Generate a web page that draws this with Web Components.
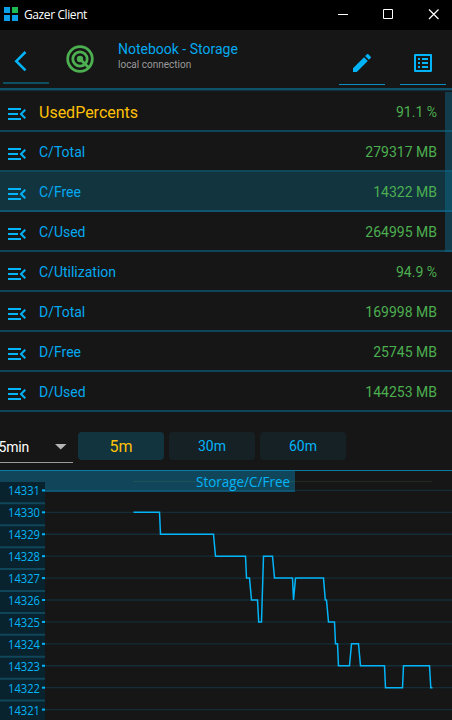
<!DOCTYPE html>
<html lang="en"><head><meta charset="utf-8"><title>Gazer Client</title>
<style>html,body{margin:0;background:#161616}body{width:452px;height:720px;overflow:hidden}</style></head>
<body><gazer-app></gazer-app>
<script>
const define = (name, html) => customElements.define(name, class extends HTMLElement {
  connectedCallback() {
    if (this.shadowRoot) return;
    const root = this.attachShadow({ mode: 'open' });
    root.innerHTML = typeof html === 'function' ? html(this) : html;
  }
});

define('title-bar', `<style>
:host{display:flex;align-items:center;height:30px;background:#000;color:#fff;font:12px "Open Sans",sans-serif;box-sizing:border-box;padding-left:4px}
.t{margin-left:6px;margin-top:-1px;flex:1;letter-spacing:-.4px}
svg{display:block}
.logo{margin-top:-2px}
</style>
<svg class="logo" width="14" height="14"><path fill="#0a9fe6" d="M0 0h6v6H0zM0 8h6v6H0zM8 8h6v6H8z"/><path fill="#1db954" d="M8 0h6v6H8z"/></svg>
<span class="t"><slot></slot></span>
<svg width="118" height="30" fill="none" stroke="#fff"><path d="M4 14.5h10M49.5 9.500h9v9h-9z"/><path stroke-width="1.200" d="M95 9.500l9.500 9.500M104.500 9.500L95 19"/></svg>`);

define('tool-button', `<style>
:host{display:flex;justify-content:center;align-items:center;width:46px;height:54px;box-sizing:border-box;border-bottom:1px solid #0b8fc0;color:#03b4f8}
:host([dim]){border-bottom:2px solid #0d5064}
</style><slot></slot>`);

define('page-header', `<style>
:host{display:flex;height:60px;box-sizing:border-box;border-bottom:2px solid #0e526b;box-shadow:0 1px 1px #0e526b66;margin-bottom:2px}
.titles{flex:1;padding:10px 0 0 23px;font-family:Roboto,sans-serif}
.a{font-size:14px;line-height:18px;color:#03a9f0}
.b{font-size:10px;line-height:14px;color:#9a9a9a}
svg{display:block}
tool-button{margin-right:15px;margin-top:1px}
tool-button.l{margin:0 0 0 3px}
tool-button.r{margin-right:6px}
.ring{margin:14px 0 0 16px}
</style>
<tool-button dim class="l"><svg width="24" height="24" style="margin:10px 14px 0 0"><path fill="none" stroke="#03b4f8" stroke-width="2.600" d="M18.500 3 9.300 12.200l9.200 9.200"/></svg></tool-button>
<svg class="ring" width="30" height="30" viewBox="0 0 30 30" fill="none" stroke="#4caf50" stroke-width="2.800"><circle cx="15" cy="15" r="12.300"/><circle cx="15" cy="15" r="7.200"/><circle cx="15" cy="15" r="3.200" fill="#4caf50" stroke="none"/><path d="M15 15l8.500 8.500"/></svg>
<div class="titles"><div class="a">Notebook - Storage</div><div class="b">local connection</div></div>
<tool-button><svg width="24" height="24" viewBox="0 0 24 24" style="margin-top:11px"><path fill="#03b4f8" d="M3 17.250V21h3.750L17.810 9.940l-3.750-3.750L3 17.250zM20.710 7.040a1 1 0 0 0 0-1.410l-2.340-2.340a1 1 0 0 0-1.410 0l-1.830 1.830 3.750 3.750 1.830-1.830z"/></svg></tool-button>
<tool-button class="r"><svg width="24" height="24" viewBox="0 0 24 24" style="margin-top:11px"><path fill="#03b4f8" d="M19 5v14H5V5h14m1.100-2H3.900c-.5 0-.9.400-.9.900v16.200c0 .4.400.9.900.9h16.200c.4 0 .9-.5.900-.9V3.900c0-.5-.5-.9-.9-.9zM11 7h6v2h-6V7zm0 4h6v2h-6v-2zm0 4h6v2h-6v-2zM7 7h2v2H7V7zm0 4h2v2H7v-2zm0 4h2v2H7v-2z"/></svg></tool-button>`);

define('data-row', el => `<style>
:host{display:flex;align-items:center;height:40px;box-sizing:border-box;border-bottom:2px solid #10465a;padding:0 15px 0 5px;font:14px Roboto,sans-serif;color:#03a9f0}
:host([selected]){background:#12343f;border-color:#0e5674}
svg{display:block;margin:5px 10px 0 0}
.n{flex:1}.v{color:#4caf50}
:host([main]) .n{font-size:16px;color:#ffc107}
.n,.v{margin-top:2px}
</style><svg width="24" height="24" viewBox="0 0 24 24"><path fill="#03b4f8" d="M3 18h13v-2H3v2zm0-5h10v-2H3v2zm0-7v2h13V6H3zm18 9.590L17.420 12 21 8.410 19.590 7l-5 5 5 5L21 15.590z"/></svg>
<span class="n"><slot></slot></span><span class="v">${el.getAttribute('value')}</span>`);

define('data-list', `<style>:host{display:block;position:relative}
.bar{position:absolute;right:0;top:0;width:7px;height:160px;background:rgba(12,116,156,.4)}</style><slot></slot><div class="bar"></div>`);

define('range-button', `<style>
:host{display:flex;align-items:center;justify-content:center;width:86px;height:28px;border-radius:4px;background:#162126;color:#03b4f8;font:14px Roboto,sans-serif}
:host([active]){background:#12343f;color:#ffc107;font-size:16px}
</style><slot></slot>`);

define('range-bar', `<style>
:host{display:flex;gap:5px;height:58px;padding-top:20px;box-sizing:border-box}
.s{width:73px;height:31px;box-sizing:border-box;border-bottom:1px solid #9a9a9a;color:#fff;font:14px Roboto,sans-serif;display:flex;align-items:center;justify-content:space-between;padding-right:6px}
.s span{margin-left:-1.500px;letter-spacing:-.15px}
</style><div class="s"><span>5min</span><svg width="12" height="6"><path fill="#b5b5b5" d="M0 0h11.500L5.750 5.500z"/></svg></div>
<range-button active>5m</range-button><range-button>30m</range-button><range-button>60m</range-button>`);

define('history-chart', () => {
  const step = 21.92, y = v => 20 + (14331 - v) * step + .4;
  let grid = '', axis = '';
  for (let v = 14331; v >= 14321; v--) {
    const g = y(v);
    grid += `<path d="M45 ${g}H452" stroke="#142d36" stroke-width="1.300"/>`;
    axis += `<path d="M0 ${g + 12.900}H45" stroke="#10465a" stroke-width="2"/><path d="M42 ${g}H45" stroke="#03b4f8" stroke-width="2"/><text x="8" y="${g + 5}" textLength="32" lengthAdjust="spacingAndGlyphs">${v}</text>`;
  }
  const pts = [[133.5,14330],[159.500,14330],[160.500,14329],[213.500,14329],[215.500,14328],[245.500,14328],[246.500,14327],[249.500,14327],[251.500,14326],[257.500,14326],[258.700,14325],[261.500,14325],[263.500,14328],[272.500,14328],[274.500,14327],[292.500,14327],[293.500,14326],[295.500,14327],[323.500,14327],[325.300,14326],[326.500,14326],[328.500,14325],[334.500,14325],[335.500,14324],[337.500,14324],[338.500,14323],[349.500,14323],[351.500,14324],[358.500,14324],[360.500,14323],[384.500,14323],[385.500,14322],[402.500,14322],[403.500,14323],[429.500,14323],[430.800,14322],[432.500,14322]];
  return `<style>:host{display:block;height:250px}svg{display:block}text{font:12.500px "Open Sans",sans-serif;fill:#03b4f8}</style>
<svg width="452" height="250"><rect width="295" height="22" fill="#11465a"/>
${grid}<path d="M0 .5H452" stroke="#0a7ba5"/><path d="M0 20.700H295" stroke="#0e5876" stroke-width="2"/><path d="M133 11.500H432" stroke="#4caf50" stroke-opacity=".15"/>
<rect y="12" width="45" height="238" fill="#08232d"/>${axis}
<text x="196" y="17" style="font-size:14px" textLength="94" lengthAdjust="spacingAndGlyphs">Storage/C/Free</text>
<polyline fill="none" stroke="#03b4f8" stroke-width="1.500" points="${pts.map(p => p[0] + ',' + y(p[1])).join(' ')}"/></svg>`;
});

define('gazer-app', `<style>:host{display:flex;flex-direction:column;width:452px;height:720px;background:#161616}</style>
<title-bar>Gazer Client</title-bar><page-header></page-header>
<data-list>
<data-row main value="91.1 %">UsedPercents</data-row><data-row value="279317 MB">C/Total</data-row>
<data-row selected value="14322 MB">C/Free</data-row><data-row value="264995 MB">C/Used</data-row>
<data-row value="94.9 %">C/Utilization</data-row><data-row value="169998 MB">D/Total</data-row>
<data-row value="25745 MB">D/Free</data-row><data-row value="144253 MB">D/Used</data-row>
</data-list><range-bar></range-bar><history-chart></history-chart>`);
</script></body></html>
